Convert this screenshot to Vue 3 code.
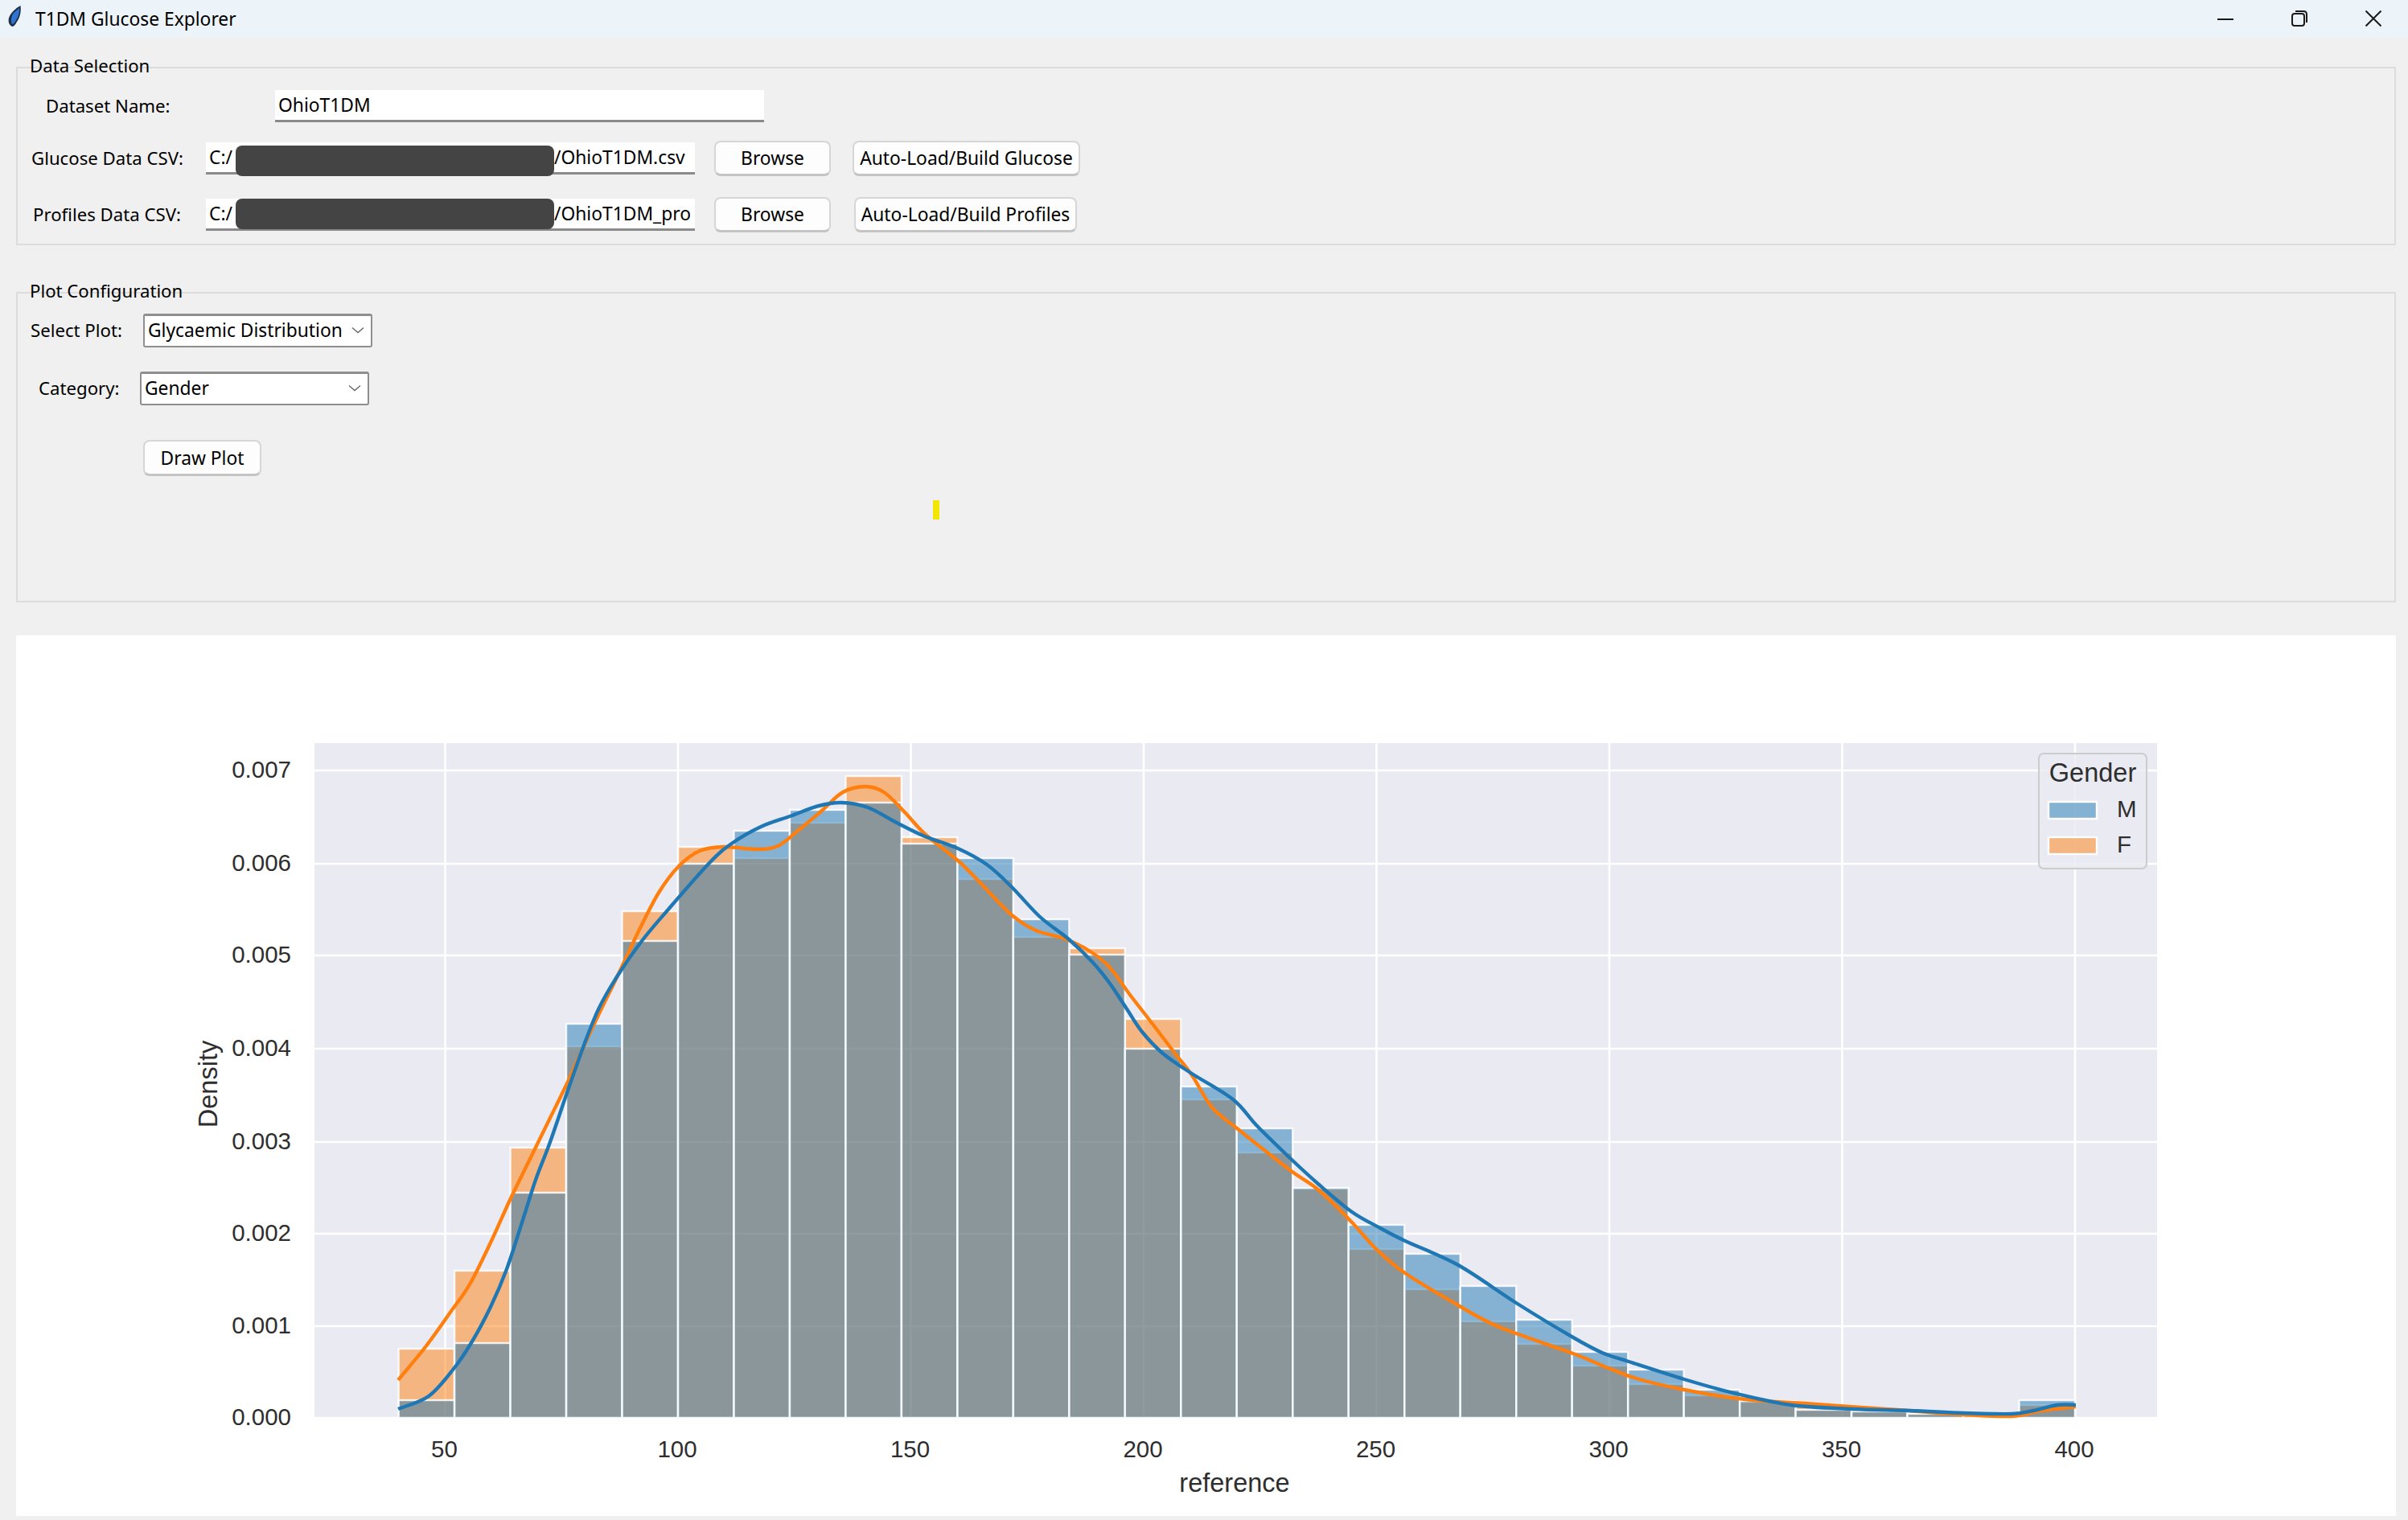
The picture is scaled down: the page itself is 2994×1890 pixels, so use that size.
<script setup>
const W = 2959, H = 1095
const L = 391, R = 2682, T = 924, B = 1763
const xOf = v => 553.5 + (v - 50) * 5.79

const xTicks = [50, 100, 150, 200, 250, 300, 350, 400].map(v => ({ v, x: xOf(v) }))
const yTicks = [
  ['0.000', 1763], ['0.001', 1649], ['0.002', 1534], ['0.003', 1420],
  ['0.004', 1304], ['0.005', 1188], ['0.006', 1074], ['0.007', 958]
].map(([t, y]) => ({ t, y }))

const mTops = [1741, 1670, 1483, 1273, 1170, 1074, 1033, 1007, 998, 1049, 1067, 1143, 1187, 1304, 1351, 1403, 1477, 1523, 1559, 1599, 1641, 1681, 1703, 1728, 1742, 1753, 1755, 1758, 1760, 1741]
const fTops = [1677, 1580, 1427, 1301, 1133, 1053, 1067, 1023, 965, 1041, 1093, 1165, 1179, 1267, 1367, 1433, 1478, 1553, 1603, 1643, 1671, 1698, 1721, 1735, 1743, 1748, 1753, 1757, 1761, 1747]
const binW = (xOf(400) - xOf(40)) / 30
const bars = tops => tops.map((y, i) => ({ x: xOf(40) + i * binW, y, w: binW, h: B - y }))
const mBars = bars(mTops)
const fBars = bars(fTops)

const smooth = p => {
  let d = `M${p[0][0]} ${p[0][1]}`
  for (let i = 0; i < p.length - 1; i++) {
    const a = p[Math.max(i - 1, 0)], b = p[i], c = p[i + 1], e = p[Math.min(i + 2, p.length - 1)]
    const c1 = [b[0] + (c[0] - a[0]) / 6, b[1] + (c[1] - a[1]) / 6]
    const c2 = [c[0] - (e[0] - b[0]) / 6, c[1] - (e[1] - b[1]) / 6]
    d += `C${c1[0].toFixed(1)} ${c1[1].toFixed(1)} ${c2[0].toFixed(1)} ${c2[1].toFixed(1)} ${c[0]} ${c[1]}`
  }
  return d
}

const blue = smooth([[495,1752],[533,1736],[564,1702],[587,1668],[610,1625],[630,1578],[650,1517],[666,1467],[684,1420],[707,1353],[727,1297],[745,1253],[768,1213],[798,1170],[829,1133],[882,1073],[911,1048],[946,1028],[982,1015],[1018,1002],[1046,998],[1079,1004],[1115,1023],[1150,1040],[1191,1055],[1227,1075],[1257,1102],[1293,1140],[1329,1168],[1359,1197],[1380,1223],[1400,1253],[1420,1283],[1446,1310],[1482,1335],[1533,1367],[1563,1400],[1604,1440],[1640,1473],[1681,1507],[1716,1527],[1747,1543],[1813,1573],[1885,1620],[1956,1663],[1992,1682],[2025,1693],[2094,1715],[2155,1732],[2227,1747],[2303,1752],[2374,1754],[2441,1757],[2502,1758],[2528,1754],[2558,1747],[2581,1747]])
const orange = smooth([[495,1716],[528,1676],[559,1633],[584,1597],[610,1545],[635,1490],[661,1437],[684,1390],[707,1343],[737,1277],[768,1213],[793,1160],[819,1110],[844,1077],[870,1058],[900,1053],[941,1056],[967,1052],[992,1033],[1023,1007],[1048,985],[1076,978],[1099,985],[1125,1010],[1150,1037],[1191,1070],[1221,1100],[1257,1137],[1288,1157],[1323,1167],[1354,1182],[1380,1203],[1405,1237],[1436,1277],[1461,1310],[1482,1337],[1507,1377],[1538,1403],[1604,1455],[1640,1480],[1681,1520],[1711,1553],[1747,1583],[1813,1623],[1864,1650],[1956,1683],[2002,1702],[2038,1715],[2094,1728],[2170,1740],[2257,1746],[2359,1753],[2441,1759],[2502,1761],[2538,1754],[2581,1749]])
</script>

<template>
  <div class="window">
    <header class="titlebar">
      <svg class="feather" width="22" height="34" viewBox="0 0 22 34">
        <path d="M7 33 L8 27 C4 25 2.5 20 4.5 15 C7 9 13 4 18.5 1 C19.5 8 18 16 14 21 C12 25 10 27 8 27 Z" fill="#1f2f4a" />
        <path d="M8 24 C6 20 7 14 10 10 C12 8 15 6 17 4 C17.5 9 16 15 13 19 C11.5 22 10 24 8 24 Z" fill="#2f74cf" />
      </svg>
      <span class="title">T1DM Glucose Explorer</span>
      <div class="controls">
        <svg width="20" height="20" viewBox="0 0 20 20"><path d="M0 11H20" stroke="#1a1a1a" stroke-width="2" /></svg>
        <svg width="20" height="20" viewBox="0 0 20 20" fill="none" stroke="#1a1a1a" stroke-width="2"><rect x="1" y="4" width="15" height="15" rx="3" /><path d="M5 1H15Q19 1 19 5V15" /></svg>
        <svg width="20" height="20" viewBox="0 0 20 20"><path d="M0.5 0.5L19.5 19.5M19.5 0.5L0.5 19.5" stroke="#1a1a1a" stroke-width="2" /></svg>
      </div>
    </header>

    <section class="group group-data">
      <span class="legend">Data Selection</span>
      <div class="row row-name">
        <label class="lbl">Dataset Name:</label>
        <div class="entry entry-name">OhioT1DM</div>
      </div>
      <div class="row row-glucose">
        <label class="lbl">Glucose Data CSV:</label>
        <div class="entry entry-path">
          <span class="path-head">C:/</span><span class="path-tail">/OhioT1DM.csv</span>
          <i class="redact redact-g"></i>
        </div>
        <button class="btn btn-browse">Browse</button>
        <button class="btn btn-auto">Auto-Load/Build Glucose</button>
      </div>
      <div class="row row-profiles">
        <label class="lbl">Profiles Data CSV:</label>
        <div class="entry entry-path">
          <span class="path-head">C:/</span><span class="path-tail">/OhioT1DM_pro</span>
          <i class="redact redact-p"></i>
        </div>
        <button class="btn btn-browse">Browse</button>
        <button class="btn btn-auto">Auto-Load/Build Profiles</button>
      </div>
    </section>

    <section class="group group-plot">
      <span class="legend">Plot Configuration</span>
      <div class="row row-select">
        <label class="lbl">Select Plot:</label>
        <div class="combo">
          <span>Glycaemic Distribution</span>
          <svg width="16" height="9" viewBox="0 0 16 9"><path d="M1 1.5L8 7.5L15 1.5" fill="none" stroke="#666" stroke-width="1.4" /></svg>
        </div>
      </div>
      <div class="row row-category">
        <label class="lbl">Category:</label>
        <div class="combo">
          <span>Gender</span>
          <svg width="16" height="9" viewBox="0 0 16 9"><path d="M1 1.5L8 7.5L15 1.5" fill="none" stroke="#666" stroke-width="1.4" /></svg>
        </div>
      </div>
      <button class="btn btn-draw">Draw Plot</button>
      <i class="marker"></i>
    </section>

    <section class="canvas">
      <svg :width="W" :height="H" :viewBox="`20 790 ${W} ${H}`" class="chart">
        <rect :x="L" :y="T" :width="R - L" :height="B - T" fill="#eaeaf2" />
        <g stroke="#fff" stroke-width="2.6">
          <line v-for="t in xTicks" :key="t.v" :x1="t.x" :x2="t.x" :y1="T" :y2="B" />
          <line v-for="t in yTicks" :key="t.t" :x1="L" :x2="R" :y1="t.y" :y2="t.y" />
        </g>
        <g fill="#ff7f0e" fill-opacity="0.5" stroke="#fff" stroke-width="2.4" stroke-opacity="0.85">
          <rect v-for="(b, i) in fBars" :key="i" :x="b.x" :y="b.y" :width="b.w" :height="b.h" />
        </g>
        <g fill="#1f77b4" fill-opacity="0.5" stroke="#fff" stroke-width="2.4" stroke-opacity="0.85">
          <rect v-for="(b, i) in mBars" :key="i" :x="b.x" :y="b.y" :width="b.w" :height="b.h" />
        </g>
        <path :d="orange" fill="none" stroke="#ff7f0e" stroke-width="4.4" />
        <path :d="blue" fill="none" stroke="#1f77b4" stroke-width="4.4" />

        <g class="tick" text-anchor="middle">
          <text v-for="t in xTicks" :key="t.v" :x="t.x - 1" y="1812">{{ t.v }}</text>
        </g>
        <g class="tick" text-anchor="end">
          <text v-for="t in yTicks" :key="t.t" x="362" :y="t.y + 9">{{ t.t }}</text>
        </g>
        <text class="axis" x="1535" y="1855" text-anchor="middle">reference</text>
        <text class="axis" text-anchor="middle" transform="translate(270 1348) rotate(-90)">Density</text>

        <rect x="2535" y="937" width="134" height="143" rx="6" fill="#eaeaf2" fill-opacity="0.8" stroke="#cccccc" stroke-width="2" />
        <text class="axis" x="2602" y="972" text-anchor="middle">Gender</text>
        <rect x="2547" y="997" width="60" height="21" fill="#1f77b4" fill-opacity="0.5" stroke="#fff" stroke-width="2.4" />
        <rect x="2547" y="1041" width="60" height="21" fill="#ff7f0e" fill-opacity="0.5" stroke="#fff" stroke-width="2.4" />
        <text class="tick" x="2632" y="1016">M</text>
        <text class="tick" x="2632" y="1060">F</text>
      </svg>
    </section>
  </div>
</template>

<style scoped>
.window {
  width: 2994px;
  height: 1890px;
  background: #f0f0f0;
  font-family: "Noto Sans", sans-serif;
  font-size: 22.8px;
  color: #000;
  overflow: hidden;
}
.titlebar {
  height: 46px;
  background: #edf4f9;
  display: flex;
  align-items: center;
  padding-left: 7px;
  padding-right: 33px;
}
.feather { flex: none; }
.title { margin-left: 15px; }
.controls {
  margin-left: auto;
  display: flex;
  align-items: center;
  gap: 72px;
}
.group {
  position: relative;
  margin: 37px 15px 0 20px;
  border: 2px solid #dcdcdc;
  box-sizing: border-box;
}
.group-data { height: 222px; padding-top: 27px; }
.group-plot { height: 386px; margin-top: 58px; padding-top: 25px; }
.legend {
  position: absolute;
  left: 15px;
  top: -18px;
  font-size: 22.2px;
  line-height: 30px;
  padding-right: 2px;
  white-space: nowrap;
}
.legend::before {
  content: "";
  position: absolute;
  z-index: -1;
  left: 0;
  right: 0;
  top: 10px;
  height: 14px;
  background: #f0f0f0;
}
.row { display: flex; align-items: center; }
.row-name { height: 40px; }
.row-glucose { height: 44px; margin-top: 23px; }
.row-profiles { height: 44px; margin-top: 26px; }
.row-category { margin-top: 30px; }
.lbl { flex: none; white-space: nowrap; padding-bottom: 1px; font-size: 22.2px; }
.row-name .lbl { margin-left: 35px; width: 285px; }
.row-glucose .lbl { margin-left: 17px; width: 217px; }
.row-profiles .lbl { margin-left: 19px; width: 215px; }
.row-select .lbl { margin-left: 16px; width: 140px; }
.row-category .lbl { margin-left: 26px; width: 126px; }
.entry {
  position: relative;
  box-sizing: border-box;
  height: 40px;
  background: #fff;
  border-bottom: 3px solid #8a8a8a;
  padding: 0 6px 0 4px;
  display: flex;
  align-items: center;
  flex: none;
  white-space: nowrap;
}
.entry-name { width: 608px; padding-bottom: 1px; }
.entry-path { width: 608px; }
.path-head { flex: none; width: 429px; }
.path-tail { flex: 1; min-width: 0; overflow: hidden; }
.redact {
  position: absolute;
  left: 37px;
  width: 396px;
  height: 38px;
  background: #444444;
  border-radius: 8px;
}
.redact-g { top: 4px; }
.redact-p { top: 0; }
.btn {
  box-sizing: border-box;
  height: 44px;
  background: #fdfdfd;
  border: 2px solid #d6d6d6;
  border-bottom: 3px solid #c4c4c4;
  border-radius: 8px;
  font: inherit;
  color: #000;
  padding: 0;
  white-space: nowrap;
  flex: none;
}
.btn-browse { width: 145px; margin-left: 24px; }
.row-glucose .btn-auto { width: 283px; margin-left: 27px; }
.row-profiles .btn-auto { width: 277px; margin-left: 29px; }
.btn-draw { display: block; width: 147px; height: 45px; margin: 43px 0 0 156px; }
.combo {
  box-sizing: border-box;
  width: 285px;
  height: 42px;
  background: #fff;
  border: 2px solid #8f8f8f;
  border-top-width: 3px;
  border-radius: 3px;
  display: flex;
  align-items: center;
  justify-content: space-between;
  padding: 0 8px 2px 4px;
  white-space: nowrap;
}
.marker {
  position: absolute;
  left: 1138px;
  top: 257px;
  width: 8px;
  height: 24px;
  background: #f2e600;
}
.canvas {
  margin: 41px 15px 0 20px;
  height: 1095px;
  background: #fff;
}
.chart { display: block; }
.tick { font: 29.5px "Liberation Sans", Arial, sans-serif; fill: #2e2e2e; }
.axis { font: 32.5px "Liberation Sans", Arial, sans-serif; fill: #2e2e2e; }
</style>

<style>
html, body { margin: 0; background: #f0f0f0; }
</style>
